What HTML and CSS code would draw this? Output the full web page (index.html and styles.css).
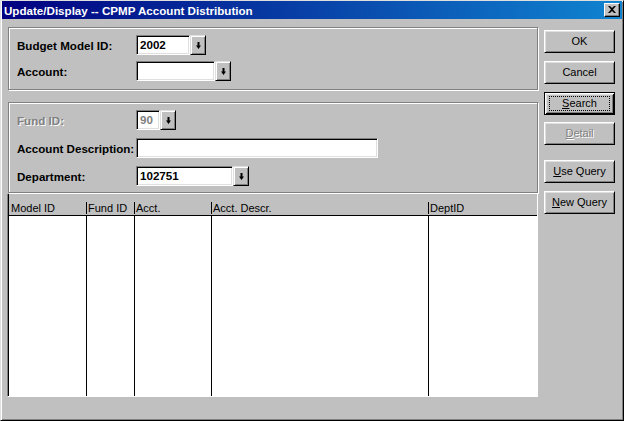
FILE: index.html
```html
<!DOCTYPE html>
<html>
<head>
<meta charset="utf-8">
<link rel="stylesheet" href="styles.css">
</head>
<body>
<div class="window">
  <div class="titlebar">
    <span class="title">Update/Display -- CPMP Account Distribution</span>
    <div class="close"><svg width="8" height="7" viewBox="0 0 8 7"><path d="M0 0h2l2 2 2-2h2L5 3.5 8 7H6L4 5 2 7H0l3-3.5z" fill="#000"/></svg></div>
  </div>
  <div class="client">
    <div class="main">
      <div class="group g1">
        <div class="row">
          <span class="lbl">Budget Model ID:</span>
          <div class="field w-model">2002</div><div class="drop"><svg width="5" height="7" viewBox="0 0 5 7"><path d="M1.5 0h2v3.5H5L2.5 7 0 3.5h1.5z" fill="#000"/></svg></div>
        </div>
        <div class="row">
          <span class="lbl">Account:</span>
          <div class="field w-account"></div><div class="drop"><svg width="5" height="7" viewBox="0 0 5 7"><path d="M1.5 0h2v3.5H5L2.5 7 0 3.5h1.5z" fill="#000"/></svg></div>
        </div>
      </div>
      <div class="group g2">
        <div class="row">
          <span class="lbl disabled">Fund ID:</span>
          <div class="field w-fund dis">90</div><div class="drop"><svg width="5" height="7" viewBox="0 0 5 7"><path d="M1.5 0h2v3.5H5L2.5 7 0 3.5h1.5z" fill="#000"/></svg></div>
        </div>
        <div class="row">
          <span class="lbl">Account Description:</span>
          <div class="field w-desc"></div>
        </div>
        <div class="row">
          <span class="lbl">Department:</span>
          <div class="field w-dept">102751</div><div class="drop"><svg width="5" height="7" viewBox="0 0 5 7"><path d="M1.5 0h2v3.5H5L2.5 7 0 3.5h1.5z" fill="#000"/></svg></div>
        </div>
      </div>
      <div class="grid">
        <div class="ghead">
          <div class="hc c1">Model ID</div>
          <div class="hc c2"><span class="sep"></span>Fund ID</div>
          <div class="hc c3"><span class="sep"></span>Acct.</div>
          <div class="hc c4"><span class="sep"></span>Acct. Descr.</div>
          <div class="hc c5"><span class="sep"></span>DeptID</div>
        </div>
        <div class="gbody">
          <div class="bc c1"></div>
          <div class="bc c2 ln"></div>
          <div class="bc c3 ln"></div>
          <div class="bc c4 ln"></div>
          <div class="bc c5 ln"></div>
        </div>
      </div>
    </div>
    <div class="buttons">
      <div class="btn">OK</div>
      <div class="btn">Cancel</div>
      <div class="btn default"><span class="focus"><u>S</u>earch</span></div>
      <div class="btn dis"><u>D</u>etail</div>
      <div class="btn spaced"><u>U</u>se Query</div>
      <div class="btn"><u>N</u>ew Query</div>
    </div>
  </div>
</div>
</body>
</html>
```
FILE: styles.css
```css
html, body {
  margin: 0;
  padding: 0;
  background: #c0c0c0;
}
body {
  font-family: "Liberation Sans", Arial, sans-serif;
  font-size: 11px;
  color: #000;
}
.window {
  width: 624px;
  height: 421px;
  box-sizing: border-box;
  background: #c0c0c0;
  border: 1px solid;
  border-color: #dfdfdf #000 #000 #dfdfdf;
  box-shadow: inset 1px 1px #fff, inset -1px -1px #808080;
  padding: 0 1px 1px 1px;
  display: flex;
  flex-direction: column;
}
.titlebar {
  height: 18px;
  background: linear-gradient(to right, #000080, #1084d0);
  display: flex;
  align-items: center;
  justify-content: space-between;
  padding: 0 2px 0 2px;
}
.title {
  color: #fff;
  font-weight: bold;
  font-size: 11.6px;
}
.close {
  width: 16px;
  height: 14px;
  box-sizing: border-box;
  background: #c0c0c0;
  border: 1px solid;
  border-color: #fff #000 #000 #fff;
  box-shadow: inset -1px -1px #808080;
  display: flex;
  align-items: center;
  justify-content: center;
  padding: 0 1px 1px 0;
}
.client {
  display: flex;
  padding: 8px 0 0 6px;
}
.main {
  width: 530px;
  display: flex;
  flex-direction: column;
}
.group {
  border: 1px solid #808080;
  box-shadow: inset 1px 1px #fff, 1px 1px #fff;
  padding: 7px 0 0 8px;
  display: flex;
  flex-direction: column;
}
.g1 {
  gap: 6px;
  padding-bottom: 8px;
}
.g2 {
  margin-top: 12px;
  gap: 8px;
  padding-bottom: 6px;
}
.row {
  display: flex;
  align-items: center;
  height: 20px;
}
.lbl {
  width: 119px;
  font-weight: bold;
  font-size: 11.6px;
}
.lbl.disabled {
  color: #808080;
  text-shadow: 1px 1px 0 #fff;
}
.field {
  height: 20px;
  box-sizing: border-box;
  background: #fff;
  border: 1px solid;
  border-color: #808080 #fff #fff #808080;
  box-shadow: inset 1px 1px #000, inset -1px -1px #dfdfdf;
  padding: 2px 0 0 3px;
  font-weight: bold;
  font-size: 11.6px;
  line-height: 14px;
}
.field.dis {
  color: #808080;
}
.w-model { width: 54px; }
.w-account { width: 79px; }
.w-fund { width: 24px; }
.w-desc { width: 242px; }
.w-dept { width: 97px; }
.drop {
  width: 16px;
  height: 20px;
  box-sizing: border-box;
  background: #c0c0c0;
  border: 1px solid;
  border-color: #dfdfdf #000 #000 #dfdfdf;
  box-shadow: inset 1px 1px #fff, inset -1px -1px #808080;
  display: flex;
  align-items: center;
  justify-content: center;
}
.grid {
  margin: 1px 0 0 -1px;
  width: 531px;
  height: 203px;
  box-sizing: border-box;
  border-left: 1px solid #808080;
  border-right: 1px solid #fff;
  border-bottom: 1px solid #fff;
  box-shadow: inset 1px 0 #000;
  padding-left: 1px;
  display: flex;
  flex-direction: column;
}
.ghead {
  height: 22px;
  box-sizing: border-box;
  border-bottom: 1px solid #000;
  display: flex;
}
.hc {
  display: flex;
  align-items: center;
  box-sizing: border-box;
  padding-top: 6px;
}
.hc.c1 { padding-left: 2px; }
.sep {
  width: 1px;
  height: 12px;
  background: #000;
  margin-right: 1px;
}
.c1 { width: 77px; }
.c2 { width: 48px; }
.c3 { width: 77px; }
.c4 { width: 217px; }
.c5 { flex: 1; }
.gbody {
  flex: 1;
  display: flex;
  background: #fff;
}
.bc {
  box-sizing: border-box;
}
.bc.ln {
  border-left: 1px solid #000;
}
.buttons {
  margin-left: 6px;
  width: 71px;
  padding-top: 3px;
  display: flex;
  flex-direction: column;
  gap: 8px;
}
.btn {
  height: 23px;
  box-sizing: border-box;
  background: #c0c0c0;
  border: 1px solid;
  border-color: #fff #000 #000 #fff;
  box-shadow: inset 1px 1px #dfdfdf, inset -1px -1px #808080;
  display: flex;
  align-items: center;
  justify-content: center;
  padding-bottom: 1px;
}
.btn.default {
  border: 1px solid #000;
  box-shadow: inset 1px 1px #fff, inset -1px -1px #000, inset 2px 2px #dfdfdf, inset -2px -2px #808080;
}
.focus {
  border: 1px dotted #000;
  width: 59px;
  height: 13px;
  display: flex;
  align-items: center;
  justify-content: center;
  line-height: 13px;
}
.btn.dis {
  color: #808080;
  text-shadow: 1px 1px 0 #fff;
  margin-top: -1px;
}
.btn.spaced {
  margin-top: 7px;
}
```
